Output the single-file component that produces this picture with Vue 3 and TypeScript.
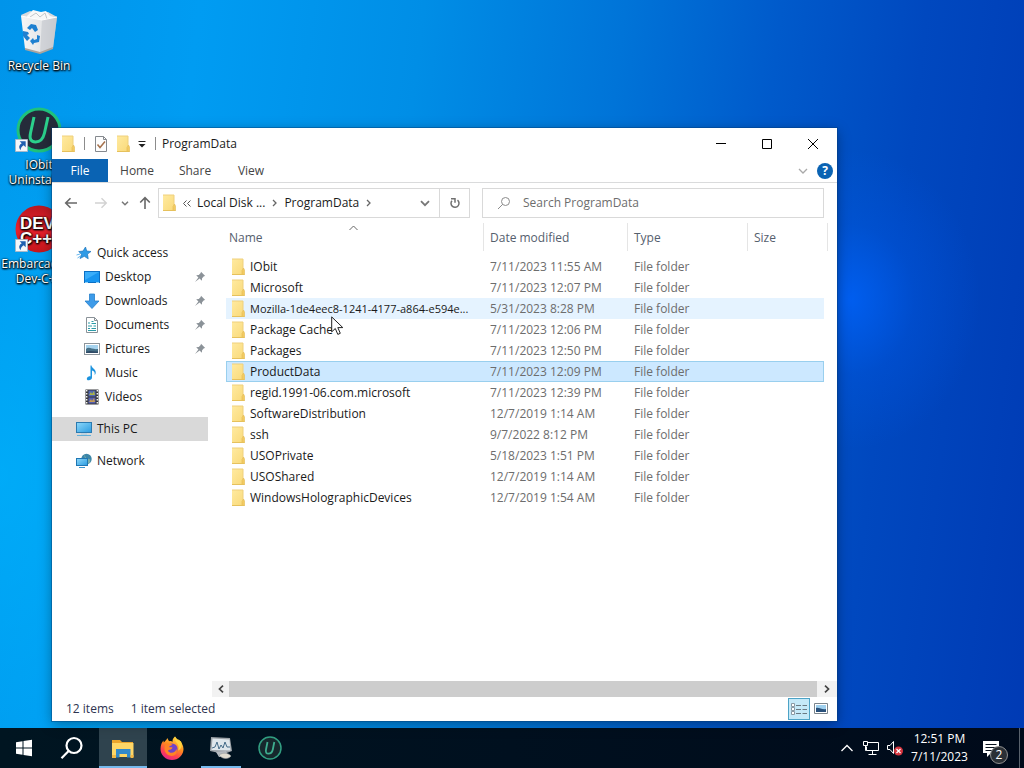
<script setup lang="ts">
import { ref } from 'vue'

interface Folder {
  name: string
  modified: string
}

interface NavItem {
  label: string
  icon: string
  pinned: boolean
}

const folders: Folder[] = [
  { name: 'IObit', modified: '7/11/2023 11:55 AM' },
  { name: 'Microsoft', modified: '7/11/2023 12:07 PM' },
  { name: 'Mozilla-1de4eec8-1241-4177-a864-e594e...', modified: '5/31/2023 8:28 PM' },
  { name: 'Package Cache', modified: '7/11/2023 12:06 PM' },
  { name: 'Packages', modified: '7/11/2023 12:50 PM' },
  { name: 'ProductData', modified: '7/11/2023 12:09 PM' },
  { name: 'regid.1991-06.com.microsoft', modified: '7/11/2023 12:39 PM' },
  { name: 'SoftwareDistribution', modified: '12/7/2019 1:14 AM' },
  { name: 'ssh', modified: '9/7/2022 8:12 PM' },
  { name: 'USOPrivate', modified: '5/18/2023 1:51 PM' },
  { name: 'USOShared', modified: '12/7/2019 1:14 AM' },
  { name: 'WindowsHolographicDevices', modified: '12/7/2019 1:54 AM' },
]

const quickItems: NavItem[] = [
  { label: 'Desktop', icon: 'i-desktop', pinned: true },
  { label: 'Downloads', icon: 'i-downloads', pinned: true },
  { label: 'Documents', icon: 'i-documents', pinned: true },
  { label: 'Pictures', icon: 'i-pictures', pinned: true },
  { label: 'Music', icon: 'i-music', pinned: false },
  { label: 'Videos', icon: 'i-videos', pinned: false },
]

const desktopIcons = [
  { label: 'Recycle Bin', icon: 'i-bin' },
  { label: 'IObit Uninstaller', icon: 'i-iobit' },
  { label: 'Embarcadero Dev-C++', icon: 'i-dev' },
]

const taskApps = [
  { label: 'File Explorer', icon: 'i-explorer', state: 'active' },
  { label: 'Firefox', icon: 'i-firefox', state: '' },
  { label: 'Task Manager', icon: 'i-taskmgr', state: 'running' },
  { label: 'IObit Uninstaller', icon: 'i-iobit-small', state: '' },
]

const selected = ref(5)
const hovered = ref(2)
const query = ref('')
</script>

<template>
  <div class="screen">
    <svg class="defs" aria-hidden="true">
      <defs>
        <linearGradient id="g-folder" x1="0" y1="0" x2="1" y2="1">
          <stop offset="0" stop-color="#ffeaa0" />
          <stop offset="1" stop-color="#f9d978" />
        </linearGradient>
        <linearGradient id="g-screen" x1="0" y1="0" x2="1" y2="1">
          <stop offset="0" stop-color="#8ed8fa" />
          <stop offset="1" stop-color="#2a9be0" />
        </linearGradient>
        <linearGradient id="g-bin" x1="0" y1="0" x2="1" y2="0">
          <stop offset="0" stop-color="#f6f6f6" />
          <stop offset="0.6" stop-color="#e4e5e7" />
          <stop offset="1" stop-color="#bfc3c8" />
        </linearGradient>
        <linearGradient id="g-fox" x1="0.8" y1="0" x2="0.3" y2="1">
          <stop offset="0" stop-color="#ffe14a" />
          <stop offset="0.45" stop-color="#ff8a1f" />
          <stop offset="0.75" stop-color="#ff4052" />
          <stop offset="1" stop-color="#e3248b" />
        </linearGradient>
        <linearGradient id="g-dev" x1="0" y1="0" x2="0" y2="1">
          <stop offset="0" stop-color="#b81820" />
          <stop offset="0.5" stop-color="#e8202c" />
          <stop offset="1" stop-color="#c4161c" />
        </linearGradient>
        <symbol id="i-folder" viewBox="0 0 14 18">
          <path d="M1 1h11v11l1.500 4.500H1z" fill="url(#g-folder)" />
          <path d="M1 1h11v10" fill="none" stroke="#efd07c" />
          <path d="M11 16.500v-4l1.500-2.500 1 2v4.500z" fill="#f3cb62" stroke="#e3bb55" stroke-width="0.600" />
          <path d="M1 16.500h12.500" stroke="#e6c15c" />
        </symbol>
        <symbol id="i-star" viewBox="0 0 16 16">
          <path d="M9.500 2l1.200 4 4.300.5-3.500 2.600.7 4.700-3.900-2.500-4.300 2.200 1.500-4.200L2.700 6.500l4.300-.4z" fill="#2f9be6" stroke="#1c76bd" stroke-width="0.700" />
          <path d="M1.500 13l3-2M.5 10l3.500-1" stroke="#69b8ef" />
        </symbol>
        <symbol id="i-desktop" viewBox="0 0 16 16">
          <rect x="0.500" y="2.500" width="15" height="11" fill="#1795f0" stroke="#0b6fc4" />
          <path d="M1 3h14L1 11z" fill="#39adfa" />
          <path d="M1 13.500h3M12 13.500h3" stroke="#8ed0f8" />
        </symbol>
        <symbol id="i-downloads" viewBox="0 0 16 16">
          <path d="M5.500 1h5v7H15l-7 7.500L1 8h4.500z" fill="#3d9be9" stroke="#2680cb" stroke-width="0.800" />
        </symbol>
        <symbol id="i-documents" viewBox="0 0 16 16">
          <path d="M2.500.5h8l3 3v12h-11z" fill="#fff" stroke="#8a9298" />
          <path d="M10.500.5v3h3" fill="none" stroke="#8a9298" />
          <path d="M4 6h2M7.500 4.500h2M7.500 6.500H12M4 9h4M9.500 9H12M4 11.500h2M7.500 11.500H12M4 13.500h8" stroke="#2b9ba8" />
        </symbol>
        <symbol id="i-pictures" viewBox="0 0 16 16">
          <rect x="0.500" y="2.500" width="15" height="11" fill="#fff" stroke="#8d959b" />
          <path d="M2 4h12v8H2z" fill="#a6d3ee" />
          <path d="M2 8c3-3 6 1 12 0v4H2z" fill="#456f86" />
          <path d="M2 11c4-2 8 0 12-.5V12H2z" fill="#2f4b67" />
        </symbol>
        <symbol id="i-music" viewBox="0 0 16 16">
          <path d="M7.500.5c.5 3.500 4.800 3.500 4.200 7.500-.3 1.500-1 2-1 2 .5-3-1-4-2.700-4.500v7c0 1.800-1.800 3-3.500 2.800-2.500-.3-2-3.300.4-3.900.8-.2 1.500 0 1.600.1V.5z" fill="#1c93de" />
        </symbol>
        <symbol id="i-videos" viewBox="0 0 16 16">
          <path d="M1.500.5h13v15h-13z" fill="#35363b" />
          <path d="M2.700 1v14M13.300 1v14" stroke="#f3f3f3" stroke-width="1.400" stroke-dasharray="1.500 1.500" />
          <path d="M4.500 1.500h7v6h-7z" fill="#5067b4" />
          <path d="M4.500 8.500h7v6h-7z" fill="#555fae" />
          <path d="M5 6l2-3 1 2 2-3 1 4z" fill="#aab348" />
          <path d="M5 13l2-3 1 2 2-3 1 4z" fill="#c59a54" />
        </symbol>
        <symbol id="i-pc" viewBox="0 0 16 16">
          <rect x="0.500" y="1.500" width="15" height="10" fill="url(#g-screen)" stroke="#2b7ab0" />
          <path d="M1 14.500h14" stroke="#63afd8" />
          <path d="M5 13h6" stroke="#a5cde4" />
        </symbol>
        <symbol id="i-network" viewBox="0 0 16 16">
          <circle cx="10.500" cy="6" r="5.200" fill="#3c86a8" />
          <path d="M8 2c2 1 1 3 3 3s1 2 3 1c1 3-1 5-3 5z" fill="#7fb0a8" />
          <rect x="0.500" y="5.500" width="11" height="7" fill="url(#g-screen)" stroke="#1f76b3" />
          <path d="M3 14.500h6" stroke="#3a93cc" />
        </symbol>
        <symbol id="i-pin" viewBox="0 0 12 12">
          <path d="M7 .8l4.200 4.200-1.300.3-1.800 1.900-.3 2.500L5.600 7.600 1 11l3.400-4.600L2.200 4.200l2.600-.3 1.900-1.800z" fill="#8b9298" />
        </symbol>
        <symbol id="i-shortcut" viewBox="0 0 14 14">
          <path d="M.5.5h13v13H.5z" fill="#f5f7fa" stroke="#a9b6c4" />
          <path d="M5 2.500h6.500V9L9.300 6.800C7.300 8 6.300 9.400 6 12 3.500 9 4.500 6.500 7.200 4.700z" fill="#1f5fb0" />
        </symbol>
        <symbol id="i-bin" viewBox="0 0 48 48">
          <path d="M6 8l9-4 8 2 10-1 9 5-5 4H11z" fill="#d8dadd" />
          <path d="M12 9l6-6 8 2 5-1 4 5 4 1-5 5H13z" fill="#f8f8f8" />
          <path d="M15 10l6-4 4 4 5-4 2 6" fill="none" stroke="#c4c7ca" />
          <path d="M6 9l21 4 15-3-4 31-13 5-15-4z" fill="url(#g-bin)" />
          <path d="M27 13l15-3-4 31-13 5z" fill="#c9ccd1" opacity="0.750" />
          <path d="M6 9l21 4 15-3" fill="none" stroke="#fff" />
          <path d="M10 41l15 4 13-5v2l-13 5-15-4z" fill="#aaa49e" />
          <path d="M12 21l4-4 5 1 2 5-3 2-3-4-2 2z" fill="#1f80d0" />
          <path d="M8 24l5 1 1 2-2 1 3 3-3 3-4-5z" fill="#1f80d0" />
          <path d="M15 34l3-3 1 2 3-1 0-4 3 1-1 6-5 1-1 2z" fill="#1f80d0" />
        </symbol>
        <symbol id="i-iobit" viewBox="0 0 48 48">
          <circle cx="24" cy="24" r="21" fill="#252b3a" stroke="#1fc27d" stroke-width="3" />
          <path d="M19 11l-3.500 16c-1.300 6 .5 9 5 9s7.500-2.500 9-9L33 11" fill="none" stroke="#2bd18c" stroke-width="3" />
          <use href="#i-shortcut" x="0" y="33" width="13" height="13" />
        </symbol>
        <symbol id="i-dev" viewBox="0 0 48 48">
          <circle cx="24" cy="24" r="23.500" fill="url(#g-dev)" />
          <text x="5" y="24" class="dev-text">DEV</text>
          <text x="5" y="39" class="dev-text">C++</text>
          <use href="#i-shortcut" x="0" y="34" width="13" height="13" />
        </symbol>
        <symbol id="i-explorer" viewBox="0 0 24 24">
          <path d="M1 4h8l2 2h11v5H1z" fill="#eca52c" />
          <path d="M1 7h21.500v14H1z" fill="#ffd666" />
          <path d="M5 13h14.500v8.500H16V18H8.500v3.500H5z" fill="#3389ca" />
          <path d="M1 19h4v3H1zM19.500 19h3v3h-3z" fill="#f3b744" />
        </symbol>
        <symbol id="i-firefox" viewBox="0 0 24 24">
          <path d="M15 .5c.7 2 2.600 3 3.700 4.800 0-1-.2-1.600-.4-2.300 3 2.500 5.200 6.500 5.200 10A11.500 11 0 1 1 .5 13c0-4 1.500-7 3-8.500 0 .8.100 1.400.3 2C5 5 7 3.500 7.200 2c1 1.200 1 2.300 2 3.200 1.500-.3 2.500 0 3.500.5C12 4 13.300 2 15 .5z" fill="url(#g-fox)" />
          <circle cx="12" cy="13" r="5.500" fill="#7044c8" />
          <path d="M5 9.500c2-2.500 5.500-2.300 7.500-.8-1 .8-3 .8-3.500 2.300 1 .3 2.500 0 3.500.5-1 3-4 1.500-4.500 3.500 2 3 7.500 2 8.500-2 2 5-3 8-7 6.500-4-1.300-6-5.500-4.500-10z" fill="#ff8425" />
          <path d="M15 .5c-2 4 3 6 3.500 10 .3 2.500-.5 4-.5 4 3-1 5-5 3-9-2-1.500-4.500-2-6-5z" fill="#ffd23c" />
        </symbol>
        <symbol id="i-taskmgr" viewBox="0 0 24 24">
          <path d="M2 1l19 1 2 13-8 3-14-3z" fill="#9da3a8" />
          <path d="M3.500 2.500l17 1 1 11-19-.5z" fill="#dfe7ec" />
          <path d="M3 12l3-1 2-5 2 7 2-4 2 3 2-6 2 5h3" fill="none" stroke="#456c89" />
          <path d="M7 16l10-1 2 5-9 1z" fill="#b6bbc0" />
          <path d="M10 19c4-3 10-2 12 1-2 3-8 4-12-1z" fill="#e2ded1" stroke="#94979a" stroke-width="0.600" />
        </symbol>
        <symbol id="i-iobit-small" viewBox="0 0 24 24">
          <circle cx="12" cy="12" r="11" fill="#16282d" stroke="#329f82" stroke-width="1.500" />
          <path d="M9.500 6L8 13.500c-.6 3 .4 4.200 2.500 4.200s3.700-1.400 4.300-4.200L16.300 6" fill="none" stroke="#3fae90" stroke-width="1.800" />
        </symbol>
      </defs>
    </svg>

    <main class="desktop">
      <div class="shortcuts">
        <button v-for="d in desktopIcons" :key="d.label" class="shortcut">
          <svg width="48" height="48"><use :href="'#' + d.icon" /></svg>
          <span>{{ d.label }}</span>
        </button>
      </div>

      <section class="window" aria-label="ProgramData">
        <header class="titlebar">
          <div class="quickbar">
            <svg width="14" height="18"><use href="#i-folder" /></svg>
            <i class="rule"></i>
            <button aria-label="Properties">
              <svg width="14" height="18" viewBox="0 0 14 18">
                <path d="M1.500 1.500h8l3 3v12h-11z" fill="#fdfdfd" stroke="#85898e" />
                <path d="M9.500 1.500v3h3" fill="none" stroke="#85898e" />
                <path d="M3.500 9.500l2.500 3 5-6" fill="none" stroke="#a5714c" stroke-width="1.500" />
              </svg>
            </button>
            <button aria-label="New folder"><svg width="14" height="18"><use href="#i-folder" /></svg></button>
            <button aria-label="Customize Quick Access Toolbar">
              <svg width="8" height="8" viewBox="0 0 8 8"><path d="M.5 1.500h7" stroke="#222" /><path d="M.5 4h7L4 7.500z" fill="#222" /></svg>
            </button>
            <i class="rule"></i>
          </div>
          <h1>ProgramData</h1>
          <div class="captions">
            <button aria-label="Minimize"><svg width="12" height="12" viewBox="0 0 12 12"><path d="M1 5.500h10" /></svg></button>
            <button aria-label="Maximize"><svg width="12" height="12" viewBox="0 0 12 12"><path d="M1.500 1.500h9v9h-9z" /></svg></button>
            <button aria-label="Close"><svg width="12" height="12" viewBox="0 0 12 12"><path d="M1 1l10 10M11 1L1 11" /></svg></button>
          </div>
        </header>

        <nav class="ribbon" aria-label="Ribbon">
          <button class="tab file">File</button>
          <button class="tab">Home</button>
          <button class="tab">Share</button>
          <button class="tab view">View</button>
          <div class="ribbon-end">
            <button aria-label="Expand the Ribbon">
              <svg width="10" height="6" viewBox="0 0 10 6"><path d="M1 1l4 4 4-4" fill="none" stroke="#a9a9a9" stroke-width="1.300" /></svg>
            </button>
            <button class="help" aria-label="Help">?</button>
          </div>
        </nav>

        <div class="navrow">
          <div class="history">
            <button aria-label="Back">
              <svg width="14" height="12" viewBox="0 0 14 12"><path d="M13 6H2M6.500 1.200L1.700 6l4.800 4.800" fill="none" stroke="#686868" stroke-width="1.600" /></svg>
            </button>
            <button aria-label="Forward">
              <svg width="14" height="12" viewBox="0 0 14 12"><path d="M1 6h11M7.500 1.200L12.300 6l-4.800 4.800" fill="none" stroke="#d2d2d2" stroke-width="1.400" /></svg>
            </button>
            <button class="narrow" aria-label="Recent locations">
              <svg width="8" height="5" viewBox="0 0 8 5"><path d="M1 .7l3 3 3-3" fill="none" stroke="#777" stroke-width="1.500" /></svg>
            </button>
            <button class="up" aria-label="Up">
              <svg width="12" height="14" viewBox="0 0 12 14"><path d="M6 13V2M1.200 6.500L6 1.700l4.800 4.800" fill="none" stroke="#686868" stroke-width="1.600" /></svg>
            </button>
          </div>
          <div class="address">
            <svg width="14" height="18"><use href="#i-folder" /></svg>
            <button class="more" aria-label="More locations">
              <svg width="8" height="7" viewBox="0 0 8 7"><path d="M3.500.5l-3 3 3 3M7.500.5l-3 3 3 3" fill="none" stroke="#555" /></svg>
            </button>
            <button>Local Disk ...</button>
            <svg width="5" height="8" viewBox="0 0 5 8"><path d="M1 1l3 3-3 3" fill="none" stroke="#666" stroke-width="1.300" /></svg>
            <button>ProgramData</button>
            <svg width="5" height="8" viewBox="0 0 5 8"><path d="M1 1l3 3-3 3" fill="none" stroke="#666" stroke-width="1.300" /></svg>
            <button class="drop" aria-label="Previous locations">
              <svg width="10" height="7" viewBox="0 0 10 7"><path d="M1 1.200l4 4 4-4" fill="none" stroke="#777" stroke-width="1.800" /></svg>
            </button>
            <button class="refresh" aria-label="Refresh">
              <svg width="12" height="12" viewBox="0 0 12 12">
                <path d="M8.500 3.200A4 4 0 1 1 3 3.700" fill="none" stroke="#707070" stroke-width="1.500" />
                <path d="M2 1.700h4v4" fill="none" stroke="#707070" stroke-width="1.500" />
              </svg>
            </button>
          </div>
          <label class="search">
            <svg width="14" height="14" viewBox="0 0 14 14"><circle cx="8.500" cy="5.500" r="4" fill="none" stroke="#8b8b8b" /><path d="M5.700 8.300L1 13" stroke="#8b8b8b" /></svg>
            <input v-model="query" type="text" placeholder="Search ProgramData" aria-label="Search ProgramData" />
          </label>
        </div>

        <div class="content">
          <nav class="sidebar" aria-label="Navigation pane">
            <button class="item root"><svg width="16" height="16"><use href="#i-star" /></svg>Quick access</button>
            <button v-for="q in quickItems" :key="q.label" class="item">
              <svg width="16" height="16"><use :href="'#' + q.icon" /></svg>{{ q.label }}
              <svg v-if="q.pinned" class="pin" width="12" height="12"><use href="#i-pin" /></svg>
            </button>
            <button class="item root spaced current"><svg width="16" height="16"><use href="#i-pc" /></svg>This PC</button>
            <button class="item root spaced"><svg width="16" height="16"><use href="#i-network" /></svg>Network</button>
          </nav>

          <div class="listpane">
            <div class="listbody">
              <table class="files">
                <colgroup>
                  <col /><col class="c-date" /><col class="c-type" /><col class="c-size" />
                </colgroup>
                <thead>
                  <tr>
                    <th scope="col">
                      Name
                      <svg class="sort" width="9" height="6" viewBox="0 0 9 6"><path d="M.5 5l4-4 4 4" fill="none" stroke="#666" /></svg>
                    </th>
                    <th scope="col">Date modified</th>
                    <th scope="col">Type</th>
                    <th scope="col">Size</th>
                  </tr>
                </thead>
                <tbody>
                  <tr
                    v-for="(f, i) in folders"
                    :key="f.name"
                    :class="{ selected: i === selected, hover: i === hovered }"
                    @click="selected = i"
                    @mouseenter="hovered = i"
                  >
                    <td>
                      <div class="name">
                        <svg width="14" height="18"><use href="#i-folder" /></svg>
                        <span :class="{ long: f.name.length > 32 }">{{ f.name }}</span>
                      </div>
                    </td>
                    <td>{{ f.modified }}</td>
                    <td>File folder</td>
                    <td></td>
                  </tr>
                </tbody>
              </table>
            </div>
            <div class="hscroll">
              <button aria-label="Scroll left"><svg width="6" height="8" viewBox="0 0 6 8"><path d="M5 .7L1.500 4 5 7.300" fill="none" stroke="#444" stroke-width="1.700" /></svg></button>
              <div class="thumb"></div>
              <button class="end" aria-label="Scroll right"><svg width="6" height="8" viewBox="0 0 6 8"><path d="M1 .7L4.500 4 1 7.300" fill="none" stroke="#444" stroke-width="1.700" /></svg></button>
            </div>
          </div>
        </div>

        <footer class="status">
          <span>12 items</span>
          <span>1 item selected</span>
          <div class="views">
            <button class="on" aria-label="Details view">
              <svg width="18" height="14" viewBox="0 0 18 14">
                <path d="M1.500 1.500h3v3h-3zM1.500 5.500h3v3h-3zM1.500 9.500h3v3h-3z" fill="#fff" stroke="#8b9aa4" />
                <path d="M6 3.500h5M12.500 3.500h4.500M6 7.500h5M12.500 7.500h4.500M6 11.500h5M12.500 11.500h4.500" stroke="#6a7982" />
              </svg>
            </button>
            <button aria-label="Large icons view">
              <svg width="16" height="12" viewBox="0 0 16 12">
                <path d="M1.500.5h13v10h-13z" fill="#fff" stroke="#7b858c" />
                <path d="M3 2h10v7H3z" fill="#9fd0ee" /><path d="M3 5c3-1 6 2 10 1v3H3z" fill="#28507a" />
              </svg>
            </button>
          </div>
        </footer>
      </section>

      <svg class="pointer" width="13" height="20" viewBox="0 0 13 20" aria-hidden="true">
        <path d="M.7.900v15l3.600-3.400 2.500 5.900 2.500-1.100-2.500-5.700h5z" fill="#fff" stroke="#222" />
      </svg>
    </main>

    <footer class="taskbar">
      <button class="sys" aria-label="Start">
        <svg width="18" height="18" viewBox="0 0 18 18"><path d="M1 3.200l6.500-1v6.300H1zM8.500 2L17 .8v7.700H8.500zM1 9.500h6.500v6.300l-6.500-1zM8.500 9.500H17v7.700L8.500 16z" fill="#fff" /></svg>
      </button>
      <button class="sys" aria-label="Search">
        <svg width="24" height="24" viewBox="0 0 24 24"><circle cx="14" cy="9.500" r="7.500" fill="none" stroke="#fff" stroke-width="2.200" /><path d="M8.600 15L1.500 22.200" stroke="#fff" stroke-width="2.200" /></svg>
      </button>
      <div class="apps">
        <button v-for="a in taskApps" :key="a.label" :class="['app', a.state]" :aria-label="a.label">
          <svg width="24" height="24"><use :href="'#' + a.icon" /></svg>
        </button>
      </div>
      <div class="tray">
        <button aria-label="Show hidden icons">
          <svg width="14" height="8" viewBox="0 0 14 8"><path d="M1.500 7L7 1.500 12.500 7" fill="none" stroke="#fff" stroke-width="1.300" /></svg>
        </button>
        <button aria-label="Network">
          <svg width="18" height="16" viewBox="0 0 18 16"><path d="M5.500 2.500h11v8h-12V6.500M10.500 10.500v3.500M6.500 14.500h8" fill="none" stroke="#fff" /><path d="M1.500 1.500h4v4h-4zM3.500 5.500v5h1" fill="none" stroke="#fff" /></svg>
        </button>
        <button aria-label="Volume muted">
          <svg width="18" height="16" viewBox="0 0 18 16"><path d="M1.500 5.500H4l3.500-4v12l-3.500-4H1.500z" fill="none" stroke="#fff" /><circle cx="12.500" cy="11" r="4.500" fill="#d5343e" /><path d="M10.500 9l4 4M14.500 9l-4 4" stroke="#fff" stroke-width="1.200" /></svg>
        </button>
        <button class="clock"><span>12:51 PM</span><span>7/11/2023</span></button>
        <button class="notify" aria-label="Notifications">
          <svg width="18" height="17" viewBox="0 0 18 17"><path d="M1 1h16v12H9l-4 4v-4H1z" fill="#fff" /><path d="M3.500 4.500h11M3.500 7.500h11M3.500 10.500h7" stroke="#0a1420" /></svg>
          <span class="badge">2</span>
        </button>
        <i class="peek"></i>
      </div>
    </footer>
  </div>
</template>

<style>
body {
  margin: 0;
}
</style>

<style scoped>
.screen {
  display: flex;
  flex-direction: column;
  height: 100vh;
  overflow: hidden;
  font: 12px/16px "Open Sans", "Noto Sans", sans-serif;
  color: #1a1a1a;
  background:
    radial-gradient(ellipse 130px 150px at 83% 39%, rgba(0, 98, 250, 0.8), rgba(0, 90, 236, 0.3) 50%, rgba(0, 80, 220, 0) 100%),
    radial-gradient(ellipse 300px 420px at 0 62%, rgba(0, 184, 255, 0.6), rgba(0, 170, 255, 0)),
    linear-gradient(97deg, #0094ea 0, #009cf2 18%, #008ee6 38%, #0074d8 56%, #005acb 70%, #0048bf 83%, #003ab4 100%);
}
.defs {
  position: absolute;
  width: 0;
  height: 0;
}
button {
  display: flex;
  align-items: center;
  justify-content: center;
  margin: 0;
  padding: 0;
  border: 0;
  background: none;
  color: inherit;
  font: inherit;
}
svg {
  flex: none;
}
.dev-text {
  font: bold 17px "Liberation Sans", sans-serif;
  fill: #fff;
}

/* desktop */
.desktop {
  position: relative;
  flex: 1;
  min-height: 0;
}
.shortcuts {
  display: flex;
  flex-direction: column;
  width: 78px;
  padding-top: 7px;
}
.shortcut {
  flex-direction: column;
  justify-content: flex-start;
  gap: 3px;
  height: 99px;
  line-height: 15px;
  color: #fff;
  text-shadow: 1px 1px 2px #000, 0 1px 2px #000, 0 0 2px #000;
}

/* window */
.window {
  position: absolute;
  inset: 128px 187px 7px 52px;
  display: flex;
  flex-direction: column;
  background: #fff;
  box-shadow: 0 0 0 1px rgba(0, 60, 120, 0.4), 0 3px 12px rgba(0, 0, 0, 0.35);
}
.titlebar {
  display: flex;
  align-items: center;
  height: 31px;
}
.quickbar {
  display: flex;
  align-items: center;
  gap: 8px;
  padding-left: 9px;
}
.rule {
  width: 1px;
  height: 13px;
  margin: 0 1px;
  background: #8c8c8c;
}
h1 {
  flex: 1;
  margin: 0 0 0 5px;
  font: inherit;
}
.captions {
  display: flex;
  margin-right: 1px;
}
.captions button {
  width: 46px;
  height: 31px;
}
.captions path {
  fill: none;
  stroke: #000;
}
.ribbon {
  display: flex;
  height: 23px;
  border-bottom: 1px solid #dadbdc;
}
.tab {
  width: 58px;
  color: #444;
}
.view {
  width: 54px;
}
.file {
  width: 56px;
  background: #0a63b3;
  color: #fff;
}
.ribbon-end {
  display: flex;
  align-items: center;
  gap: 9px;
  margin-left: auto;
  padding-right: 4px;
}
.help {
  width: 16px;
  height: 16px;
  border-radius: 50%;
  background: #0a63b3;
  color: #fff;
  font-weight: bold;
}
.navrow {
  display: grid;
  grid-template-columns: 106px minmax(0, 312fr) minmax(0, 354fr);
  align-items: center;
  height: 40px;
  padding-right: 13px;
}
.history {
  display: flex;
  padding-left: 4px;
}
.history button {
  width: 30px;
  height: 24px;
}
.history .narrow {
  width: 17px;
}
.history .up {
  width: 24px;
}
.address {
  display: flex;
  align-items: center;
  height: 30px;
  padding-left: 3px;
  box-sizing: border-box;
  border: 1px solid #d9d9d9;
  gap: 7px;
}
.address .more {
  margin-right: -1px;
}
.address .drop {
  margin-left: auto;
  width: 22px;
}
.address .refresh {
  width: 30px;
  height: 28px;
  margin-left: -4px;
  border-left: 1px solid #d9d9d9;
}
.search {
  display: flex;
  align-items: center;
  gap: 8px;
  height: 30px;
  margin-left: 12px;
  padding-left: 14px;
  box-sizing: border-box;
  border: 1px solid #d9d9d9;
}
.search input {
  flex: 1;
  min-width: 0;
  padding: 0 4px;
  border: 0;
  outline: 0;
  background: none;
  font: inherit;
}
.search input::placeholder {
  color: #6d6d6d;
  opacity: 1;
}
.content {
  display: flex;
  flex: 1;
  min-height: 0;
}
.sidebar {
  width: 156px;
  padding-top: 18px;
}
.item {
  justify-content: flex-start;
  gap: 5px;
  width: 100%;
  height: 24px;
  padding-left: 32px;
}
.root {
  padding-left: 24px;
}
.spaced {
  margin-top: 8px;
}
.current {
  background: #d9d9d9;
}
.pin {
  margin-left: auto;
  margin-right: 2px;
}
.listpane {
  display: flex;
  flex-direction: column;
  flex: 1;
  min-width: 0;
  margin-left: 4px;
}
.listbody {
  flex: 1;
  min-height: 0;
  padding: 0 13px 0 14px;
}
.files {
  width: 100%;
  border-collapse: collapse;
  table-layout: fixed;
}
.c-date {
  width: 144px;
}
.c-type {
  width: 120px;
}
.c-size {
  width: 76px;
}
th {
  position: relative;
  height: 33px;
  padding: 0 0 3px 6px;
  box-sizing: border-box;
  text-align: left;
  font-weight: normal;
  color: #55606e;
}
th:first-child {
  padding-left: 3px;
}
th::after {
  content: "";
  position: absolute;
  top: 0;
  right: 0;
  width: 1px;
  height: 28px;
  background: #e5e5e5;
}
th:last-child::after {
  right: -4px;
}
.sort {
  position: absolute;
  top: 2px;
  left: 123px;
}
td {
  height: 21px;
  padding: 0 0 0 6px;
  color: #6d6d6d;
  white-space: nowrap;
}
td:first-child {
  padding-left: 5px;
}
.name {
  display: flex;
  align-items: center;
  gap: 5px;
  color: #1a1a1a;
}
.long {
  font-size: 11px;
}
.hover {
  background: #e5f3ff;
}
.selected {
  background: #cce8ff;
  outline: 1px solid #99cfee;
  outline-offset: -1px;
}
.hscroll {
  display: flex;
  height: 16px;
  background: #f2f2f2;
}
.hscroll button {
  width: 17px;
}
.hscroll .end {
  width: 20px;
}
.thumb {
  flex: 1;
  background: #cdcdcd;
}
.status {
  display: flex;
  align-items: center;
  gap: 17px;
  height: 24px;
  padding: 0 5px 0 14px;
  color: #2d3350;
}
.views {
  display: flex;
  margin-left: auto;
}
.views button {
  width: 22px;
  height: 22px;
}
.views .on {
  border: 1px solid #4da3c6;
  background: #c5e9f8;
  box-sizing: border-box;
}
.pointer {
  position: absolute;
  left: 331px;
  top: 316px;
}

/* taskbar */
.taskbar {
  display: flex;
  height: 40px;
  background: linear-gradient(90deg, #001521, #00101f 50%, #000a1a);
  color: #fff;
}
.sys {
  width: 48px;
}
.apps {
  display: flex;
  gap: 1px;
  padding-left: 3px;
}
.app {
  width: 48px;
}
.active {
  background: #2f434e;
  box-shadow: inset 0 -2px #76b9ed;
}
.running {
  background: linear-gradient(#76b9ed, #76b9ed) center bottom / 40px 2px no-repeat;
}
.tray {
  display: flex;
  margin-left: auto;
}
.tray button {
  width: 24px;
}
.tray .clock {
  flex-direction: column;
  width: 65px;
  line-height: 18px;
}
.tray .notify {
  position: relative;
  width: 38px;
}
.badge {
  position: absolute;
  left: 18px;
  top: 18px;
  width: 16px;
  height: 16px;
  border: 1px solid #909090;
  border-radius: 50%;
  background: #2b3036;
}
.peek {
  width: 4px;
  margin-left: 9px;
  border-left: 1px solid #59626c;
}
</style>
